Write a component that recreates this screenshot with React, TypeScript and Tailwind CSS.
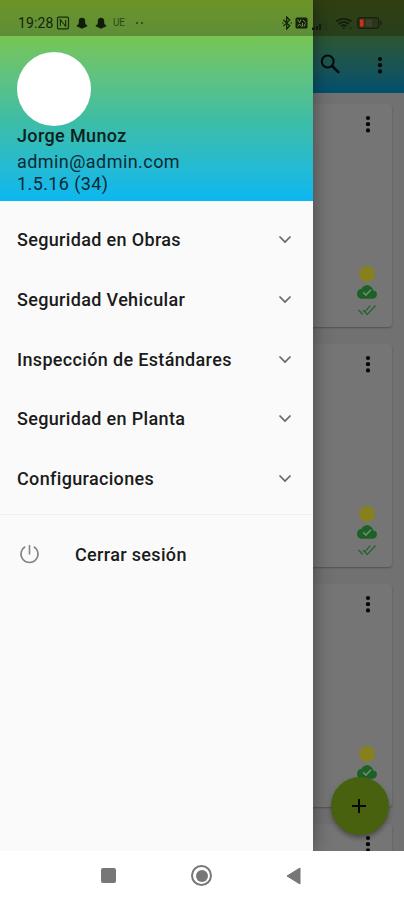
import React from "react";

const Dots = () => (
  <svg width="6" height="18" viewBox="0 0 6 18" fill="#050505">
    <circle cx="3" cy="3" r="2.1" />
    <circle cx="3" cy="9.2" r="2.1" />
    <circle cx="3" cy="15.4" r="2.1" />
  </svg>
);

const CloudDone = () => (
  <svg width="20" height="20" viewBox="0 0 24 24" fill="#1c6125">
    <path d="M19.35 10.04C18.67 6.59 15.64 4 12 4 9.11 4 6.6 5.64 5.35 8.04 2.34 8.36 0 10.91 0 14c0 3.31 2.69 6 6 6h13c2.76 0 5-2.24 5-5 0-2.64-2.05-4.78-4.65-4.96z" />
    <path d="M7.500 12.500l3.200 3.200 6-6.400" fill="none" stroke="#6f8a70" strokeWidth="2" />
  </svg>
);

const DoubleCheck = () => (
  <svg width="20" height="14" viewBox="0 0 20 14" fill="none" stroke="#2c6135" strokeWidth="1.4">
    <path d="M1.500 7l4.300 4.600M6 7l4.200 4.400L18.500 2.500M8 8.600l5.300-6" />
  </svg>
);

const Card = () => (
  <div className="mr-3 flex h-[223px] shrink-0 flex-col items-end justify-between rounded bg-[#757575] pt-[11px] pr-[15px] pb-[10px] shadow-[0_1px_2px_rgba(0,0,0,0.3)]">
    <div className="flex w-[19px] justify-center">
      <Dots />
    </div>
    <div className="flex w-5 flex-col items-center">
      <div className="size-4 rounded-full bg-[#87801f]" />
      <div className="h-5"><CloudDone /></div>
      <div className="mt-[1px] h-[14px]"><DoubleCheck /></div>
    </div>
  </div>
);

const Snap = () => (
  <svg width="12" height="13" viewBox="0 0 12 13" fill="#101d08">
    <path d="M6 .8C8.3.8 9.2 2.2 9.2 4v1.8c0 1.4 1 2.2 2.3 2.9-.2.8-1.1.8-1.7 1.1-.2.8-1.3.7-2 .9-.5.5-1 .9-1.8.9s-1.3-.4-1.8-.9c-.7-.2-1.8-.1-2-.9-.6-.3-1.5-.3-1.7-1.1C1.800 8 2.800 7.200 2.800 5.800V4C2.800 2.200 3.700.8 6 .8z" />
  </svg>
);

const StatusBar = () => (
  <div className="absolute inset-x-0 top-0 flex h-9 items-start justify-between pt-[15px] pr-[22px] pl-[18px] text-[#14230b]">
    <div className="flex h-4 items-center">
      <span className="w-[38px] text-[14px] leading-4 tracking-[0.1px]">19:28</span>
      <svg width="14" height="14" viewBox="0 0 14 14" fill="none" stroke="#1a2b0e" strokeWidth="1.2">
        <rect x="1.500" y="1.200" width="11" height="11.600" rx="1" />
        <path d="M4.400 10V4l5.200 6V4M3.500 4h2M8.500 10h2" strokeWidth="1.100" />
      </svg>
      <span className="ml-[6px]"><Snap /></span>
      <span className="ml-[7px]"><Snap /></span>
      <span className="ml-[6px] text-[10px] leading-4 tracking-[-0.3px] text-[#2f471a]">UE</span>
      <span className="ml-[11px] flex gap-[3px]">
        <i className="size-[2px] rounded-full bg-[#29401a]" />
        <i className="size-[2px] rounded-full bg-[#29401a]" />
      </span>
    </div>
    <div className="flex h-4 items-center">
      <svg width="10" height="14" viewBox="0 0 10 14" fill="none" stroke="#14230b" strokeWidth="1.3">
        <path d="M1.300 3.800l6.400 6L4.700 13V1l3 3.100-6.400 6" />
        <path d="M.3 7h1M8.700 7h1" />
      </svg>
      <svg className="ml-[3px]" width="13" height="12" viewBox="0 0 13 12">
        <rect x=".5" y=".5" width="12" height="11" rx="1.500" fill="#14230b" />
        <path d="M2.500 2.500l2 3 1.500-3M2.500 9.500l2-2.500 2 2.500M7.500 9.500V6M8 3l2.500 2.500M10.500 6.500L9 9.500" stroke="#719044" fill="none" />
      </svg>
      <svg className="ml-[4px]" width="17" height="13" viewBox="0 0 17 13">
        <path d="M0 13h3v-2.500H0zM4 13h2V9H4zM7 13h2V7H7z" fill="#101a0a" />
        <path d="M10 13h2V5h-2zM13 13h2V3h-2z" fill="#28351b" />
      </svg>
      <svg className="ml-[6px]" width="18" height="13" viewBox="0 0 18 13" fill="none" stroke="#111b0b" strokeWidth="1.700">
        <path d="M1.200 4.500c4.400-3.700 10.700-3.700 15.200 0M3.700 7c3-2.500 7.200-2.500 10.200 0M6.200 9.300c1.500-1.300 3.600-1.300 5.200 0" />
        <path d="M7.300 10.600h3l-1.500 1.600z" fill="#111b0b" stroke="none" />
        <circle cx="15.500" cy="11" r=".8" fill="#111b0b" stroke="none" />
      </svg>
      <svg className="ml-[4px]" width="25" height="12" viewBox="0 0 25 12">
        <rect x=".7" y=".7" width="21" height="10.600" rx="2.300" fill="#293718" stroke="#182111" strokeWidth="1.300" />
        <path d="M23 4h1.500v4H23z" fill="#182111" />
        <path d="M3 2.500h3.500v7H3z" fill="#e3261c" />
        <path d="M9 2.500h6v7H9z" fill="#384128" />
      </svg>
    </div>
  </div>
);

const sections = [
  "Seguridad en Obras",
  "Seguridad Vehicular",
  "Inspección de Estándares",
  "Seguridad en Planta",
  "Configuraciones",
];

export default function App() {
  return (
    <div className="relative flex h-[900px] w-[404px] flex-col overflow-hidden bg-white font-[Roboto,sans-serif]">
      <div className="relative h-[851px] shrink-0 overflow-hidden bg-[#717171]">
        <div className="h-[93px] bg-linear-to-b from-[#2b5632] from-40% to-[#00506f]">
          <div className="h-9 bg-linear-to-b from-[#303f10] to-[#283f1b]" />
          <div className="flex h-[57px] items-center justify-end pr-[21px]">
            <svg className="mr-[36px]" width="21" height="21" viewBox="0 0 21 21" fill="none" stroke="#030b0b">
              <circle cx="7.700" cy="7.500" r="5.900" strokeWidth="2" />
              <path d="M12.200 12l6.800 6.800" strokeWidth="2.500" />
            </svg>
            <Dots />
          </div>
        </div>
        <div className="flex flex-col gap-[17px] pt-[11px]">
          <Card />
          <Card />
          <Card />
          <Card />
        </div>
        <button className="absolute top-[777px] left-[331px] flex size-[58px] items-center justify-center rounded-full bg-[#47610f] shadow-[0_3px_5px_rgba(0,0,0,0.35)]">
          <svg className="mr-[2px]" width="14" height="14" viewBox="0 0 14 14" stroke="#050800" strokeWidth="2">
            <path d="M7 0v14M0 7h14" />
          </svg>
        </button>
        <aside className="absolute inset-y-0 left-0 flex w-[313px] flex-col bg-[#fafafa] shadow-[0_0_18px_rgba(0,0,0,0.4)]">
          <header className="h-[201px] shrink-0 bg-linear-to-b from-[#78c552] from-18% via-[#3dbda5] via-60% to-[#09b7f2]">
            <div className="h-9 bg-linear-to-b from-[#6e9427] to-[#5d8e38]" />
            <div className="flex flex-col pt-4 pl-[17px] text-[18px] leading-[22px] text-[#0b2a33]">
              <div className="size-[74px] rounded-full bg-white" />
              <span className="-mt-px font-medium tracking-[0.37px] text-[#0b211e]">Jorge Munoz</span>
              <span className="mt-[4px] tracking-[0.44px]">admin@admin.com</span>
              <span className="tracking-[0.4px]">1.5.16 (34)</span>
            </div>
          </header>
          <nav className="flex flex-col pt-[9px] text-[18px] font-medium tracking-[0.34px] text-[#1b1b1b]">
            {sections.map((name) => (
              <div key={name} className="flex h-[59.7px] items-center justify-between pr-[21px] pl-[17px]">
                <span>{name}</span>
                <svg width="14" height="9" viewBox="0 0 14 9" fill="none" stroke="#666" strokeWidth="1.700">
                  <path d="M1.500 1.500L7 7l5.500-5.500" />
                </svg>
              </div>
            ))}
            <div className="mt-[6px] h-px bg-[#f0f0f0]" />
            <div className="mt-[8px] flex h-[62px] items-center pl-[19px]">
              <svg width="21" height="21" viewBox="0 0 21 21" fill="none" stroke="#858585" strokeWidth="1.600">
                <path d="M10.500 1v9.500M6.200 2.700a8.500 8.500 0 1 0 8.600 0" />
              </svg>
              <span className="ml-[35px]">Cerrar sesión</span>
            </div>
          </nav>
        </aside>
        <StatusBar />
      </div>
      <div className="flex h-[49px] items-center pl-[101px]">
        <div className="size-[15px] rounded-[2px] bg-[#777]" />
        <div className="ml-[75px] flex size-[21px] items-center justify-center rounded-full border-2 border-[#777]">
          <div className="size-[12px] rounded-full bg-[#777]" />
        </div>
        <svg className="ml-[74px]" width="15" height="18" viewBox="0 0 15 18" fill="#777">
          <path d="M14 1v16L1 9z" stroke="#777" strokeLinejoin="round" />
        </svg>
      </div>
    </div>
  );
}
